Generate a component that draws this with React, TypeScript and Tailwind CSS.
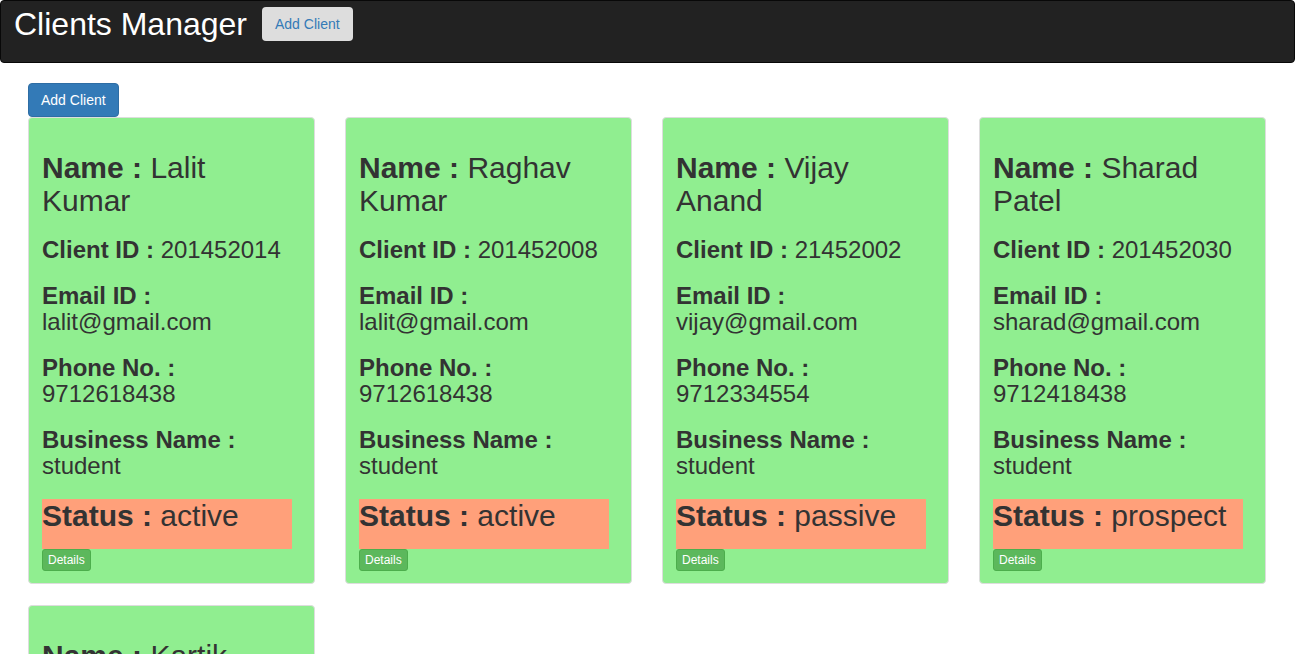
const clients = [
  { first: 'Lalit', last: 'Kumar', id: '201452014', email: 'lalit@gmail.com', phone: '9712618438', business: 'student', status: 'active' },
  { first: 'Raghav', last: 'Kumar', id: '201452008', email: 'lalit@gmail.com', phone: '9712618438', business: 'student', status: 'active' },
  { first: 'Vijay', last: 'Anand', id: '21452002', email: 'vijay@gmail.com', phone: '9712334554', business: 'student', status: 'passive' },
  { first: 'Sharad', last: 'Patel', id: '201452030', email: 'sharad@gmail.com', phone: '9712418438', business: 'student', status: 'prospect' },
  { first: 'Kartik', last: 'Sharma', id: '201452019', email: 'kartik@gmail.com', phone: '9712618438', business: 'student', status: 'active' },
]

type Client = (typeof clients)[number]

function ClientCard({ c }: { c: Client }) {
  return (
    <div className="w-[287px] rounded-[4px] border border-[#ddd] bg-[#90ee90] px-[13px] pt-[13px] pb-[12px] text-[#333]">
      <h2 className="mt-[20px] text-[30px] leading-[33px] font-medium">
        <b>Name :</b> {c.first} {c.last}
      </h2>
      <h3 className="mt-[20px] text-[24px] leading-[26px] font-medium">
        <b>Client ID :</b> {c.id}
      </h3>
      <h3 className="mt-[20px] text-[24px] leading-[26px] font-medium">
        <b>Email ID :</b>
        <br />
        {c.email}
      </h3>
      <h3 className="mt-[20px] text-[24px] leading-[26px] font-medium">
        <b>Phone No. :</b>
        <br />
        {c.phone}
      </h3>
      <h3 className="mt-[20px] text-[24px] leading-[26px] font-medium">
        <b>Business Name :</b>
        <br />
        {c.business}
      </h3>
      <div className="mt-[20px] h-[50px] w-[250px] bg-[#ffa07a]">
        <h2 className="text-[30px] leading-[33px]">
          <b>Status :</b> {c.status}
        </h2>
      </div>
      <button className="block h-[22px] rounded-[3px] border border-[#4cae4c] bg-[#5cb85c] px-[5px] text-[12px] leading-[18px] text-white">
        Details
      </button>
    </div>
  )
}

export default function App() {
  return (
    <div className="min-h-[654px] bg-white font-['Liberation_Sans',Arial,sans-serif] text-[14px] text-[#333]">
      <nav className="flex h-[63px] items-start rounded-[4px] border border-[#080808] bg-[#222] pl-[13px] pt-[6px]">
        <span className="text-[32px] leading-[34px] text-white">Clients Manager</span>
        <button className="ml-[15px] h-[34px] rounded-[4px] bg-[#ddd] px-[13px] text-[14px] text-[#337ab7]">
          Add Client
        </button>
      </nav>
      <div className="px-[28px] pt-[20px]">
        <button className="h-[34px] rounded-[4px] border border-[#2e6da4] bg-[#337ab7] px-[12px] text-[14px] text-white">
          Add Client
        </button>
        <div className="grid grid-cols-[repeat(4,287px)] gap-x-[30px] gap-y-[21px]">
          {clients.map((c) => (
            <ClientCard key={c.id + c.first} c={c} />
          ))}
        </div>
      </div>
    </div>
  )
}
